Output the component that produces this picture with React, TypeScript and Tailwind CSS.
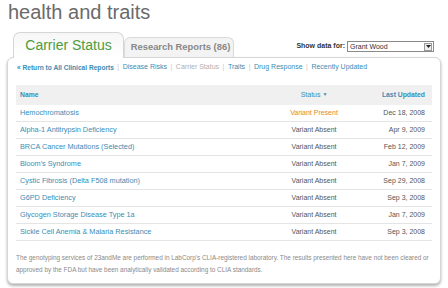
import React from "react";

const rows: { name: string; status: string; date: string; present?: boolean }[] = [
  { name: "Hemochromatosis", status: "Variant Present", date: "Dec 18, 2008", present: true },
  { name: "Alpha-1 Antitrypsin Deficiency", status: "Variant Absent", date: "Apr 9, 2009" },
  { name: "BRCA Cancer Mutations (Selected)", status: "Variant Absent", date: "Feb 12, 2009" },
  { name: "Bloom's Syndrome", status: "Variant Absent", date: "Jan 7, 2009" },
  { name: "Cystic Fibrosis (Delta F508 mutation)", status: "Variant Absent", date: "Sep 29, 2008" },
  { name: "G6PD Deficiency", status: "Variant Absent", date: "Sep 3, 2008" },
  { name: "Glycogen Storage Disease Type 1a", status: "Variant Absent", date: "Jan 7, 2009" },
  { name: "Sickle Cell Anemia & Malaria Resistance", status: "Variant Absent", date: "Sep 3, 2008" },
];

function Sep() {
  return <span className="mx-[3.5px] text-[#c8c8c8]">|</span>;
}

export default function App() {
  return (
    <div
      className="w-[448px] h-[288px] bg-white overflow-hidden"
      style={{ fontFamily: '"Liberation Sans", Arial, sans-serif' }}
    >
      <div className="pl-[8px] text-[20px] leading-[24px] text-[#6a6a6a]">health and traits</div>

      <div className="flex items-end mt-[8px] h-[25px] pr-[14px]">
        <div className="ml-[13px] relative z-10 mb-[-1px] h-[26px] w-[111px] rounded-t-[7px] border border-b-0 border-[#d6d6d6] bg-gradient-to-b from-[#f6f6f6] to-white flex items-center justify-center">
          <span className="text-[14px] leading-[16px] text-[#4f9b3c] mt-[-2px]">Carrier Status</span>
        </div>
        <div className="h-[20px] w-[110px] rounded-t-[6px] border border-b-0 border-[#dadada] bg-[#f3f3f3] flex items-center justify-center pl-[3px]">
          <span className="text-[9.4px] font-bold text-[#888]">Research Reports (86)</span>
        </div>
        <div className="flex-1" />
        <div className="flex items-center self-center mt-[4px]">
          <span className="text-[7px] font-bold text-[#333] mr-[2px]">Show data for:</span>
          <div className="w-[87px] h-[11px] border border-[#8a8a8a] bg-white flex items-center">
            <span className="flex-1 pl-[2px] text-[7px] leading-[9px] text-[#333]">Grant Wood</span>
            <div className="w-[8px] h-[8px] mr-[1px] border border-[#9a9a9a] bg-[#eee] flex items-center justify-center">
              <svg width="5" height="3" viewBox="0 0 5 3">
                <path d="M0 0 H5 L2.5 3 Z" fill="#222" />
              </svg>
            </div>
          </div>
        </div>
      </div>

      <div className="ml-[7px] w-[434px] h-[227px] border border-[#d6d6d6] rounded-[6px] bg-white shadow-[0_2px_3px_rgba(0,0,0,0.3)] px-[8px]">
        <div className="h-[18px] flex items-center pl-[1px] pt-[1px] text-[7px] text-[#3a8db5] whitespace-nowrap">
          <span className="font-bold text-[6.6px]">« Return to All Clinical Reports</span>
          <Sep />
          <span>Disease Risks</span>
          <Sep />
          <span className="text-[#b0b0b0]">Carrier Status</span>
          <Sep />
          <span>Traits</span>
          <Sep />
          <span>Drug Response</span>
          <Sep />
          <span>Recently Updated</span>
        </div>

        <div className="mt-[9px] text-[7.3px]">
          <div className="grid grid-cols-[1fr_100px_68px] h-[20px] items-center bg-[#f0f0f0] text-[#3a8db5]">
            <span className="pl-[4px] font-bold text-[6.8px]">Name</span>
            <span className="text-center text-[7px]">
              Status <span className="text-[5px] align-[1px]">▼</span>
            </span>
            <span className="text-right pr-[7px] font-bold text-[6.8px]">Last Updated</span>
          </div>
          {rows.map((r) => (
            <div
              key={r.name}
              className="grid grid-cols-[1fr_100px_68px] h-[17px] items-center border-b border-[#e4e4e4]"
            >
              <span className="pl-[4px] text-[#3a8db5]">{r.name}</span>
              <span className={"text-center text-[7px] " + (r.present ? "text-[#e08a2e]" : "text-[#555]")}>
                {r.status}
              </span>
              <span className="text-right pr-[7px] text-[7px] text-[#555]">{r.date}</span>
            </div>
          ))}
        </div>

        <div className="mt-[11px] text-[6.4px] leading-[12px] text-[#8a8a8a] whitespace-nowrap">
          The genotyping services of 23andMe are performed in LabCorp's CLIA-registered laboratory. The results presented here have not been cleared or
          <br />
          approved by the FDA but have been analytically validated according to CLIA standards.
        </div>
      </div>
    </div>
  );
}
